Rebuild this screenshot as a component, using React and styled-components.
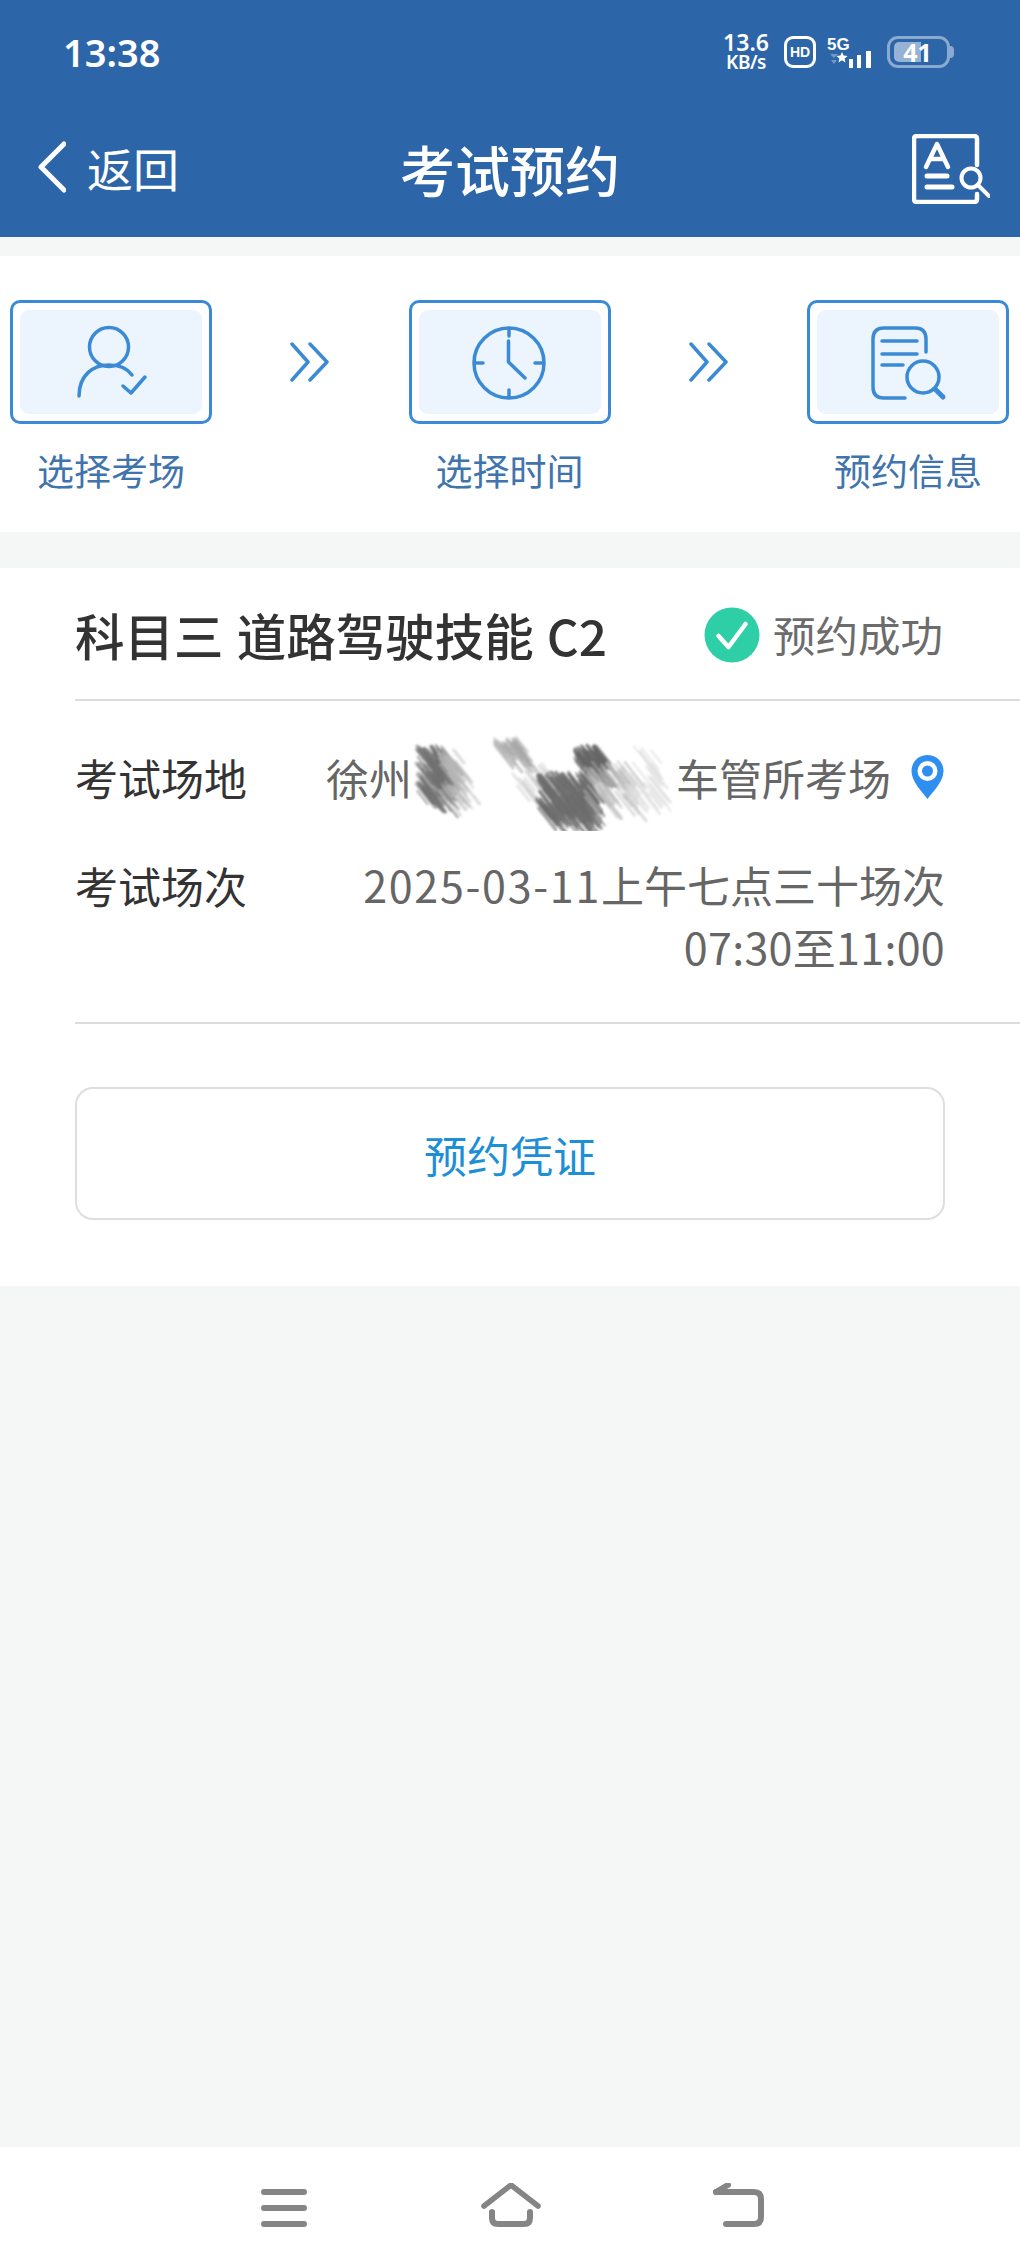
import React from "react";
import styled, { createGlobalStyle } from "styled-components";

const Global = createGlobalStyle`
  html, body { margin: 0; padding: 0; background: #f4f7f6; }
  * { box-sizing: border-box; }
  body { font-family: "Noto Sans CJK SC", "Noto Sans", sans-serif; }
`;

const Page = styled.div`
  width: 1020px;
  height: 2267px;
  display: flex;
  flex-direction: column;
  background: #f4f7f6;
  overflow: hidden;
`;

const Header = styled.header`
  height: 237px;
  background: #2d65a9;
  color: #fff;
  flex: none;
`;

const StatusBar = styled.div`
  height: 104px;
  padding: 0 70px 0 63px;
  display: flex;
  align-items: center;
  justify-content: space-between;
`;

const Clock = styled.span`
  font-family: "Noto Sans", sans-serif;
  font-size: 38px;
  font-weight: 600;
  line-height: 1;
`;

const StatusIcons = styled.div`
  display: flex;
  align-items: center;
`;

const NetSpeed = styled.div`
  width: 48px;
  margin-right: 14px;
  font-family: "Noto Sans", sans-serif;
  font-weight: 600;
  text-align: center;
  font-size: 23px;
  line-height: 20px;
  & small { display: block; font-size: 19px; font-weight: 600; letter-spacing: -0.5px; }
`;

const HdBadge = styled.div`
  width: 32px;
  height: 32px;
  margin-right: 11px;
  border: 3px solid #fff;
  border-radius: 9px;
  display: flex;
  align-items: center;
  justify-content: center;
  font-family: "Liberation Sans", sans-serif;
  font-size: 14px;
  font-weight: 700;
`;

const Signal = styled.svg`
  width: 46px;
  height: 34px;
  margin-right: 14px;
  display: block;
`;

const SignalText = styled.text`
  font-family: "Liberation Sans", sans-serif;
  font-size: 17px;
  font-weight: 700;
  fill: #fff;
`;

const Battery = styled.div`
  position: relative;
  width: 63px;
  height: 32px;
  border: 3px solid rgba(255, 255, 255, 0.45);
  border-radius: 11px;
  display: flex;
  align-items: center;
  justify-content: center;
  font-family: "Noto Sans", sans-serif;
  font-size: 25px;
  font-weight: 700;
  line-height: 1;
  padding-right: 2px;
  &::before {
    content: "";
    position: absolute;
    left: 4px;
    top: 3px;
    bottom: 3px;
    width: 27px;
    border-radius: 5px 0 0 5px;
    background: rgba(255, 255, 255, 0.5);
  }
  &::after {
    content: "";
    position: absolute;
    right: -7px;
    top: 7px;
    width: 4px;
    height: 12px;
    border-radius: 0 5px 5px 0;
    background: rgba(255, 255, 255, 0.45);
  }
  & span { position: relative; }
`;

const NavBar = styled.div`
  position: relative;
  height: 129px;
  padding: 0 30px 0 38px;
  display: flex;
  align-items: center;
  justify-content: space-between;
`;

const BackLink = styled.div`
  display: flex;
  align-items: center;
  gap: 21px;
  font-size: 46px;
  line-height: 1;
  padding-bottom: 4px;
`;

const NavTitle = styled.h1`
  position: absolute;
  left: 0;
  right: 0;
  top: 33px;
  margin: 0;
  text-align: center;
  font-size: 55px;
  line-height: 62px;
  font-weight: 500;
`;

const Steps = styled.section`
  margin-top: 19px;
  height: 276px;
  flex: none;
  background: #fff;
  padding: 44px 11px 0 10px;
  display: flex;
  justify-content: space-between;
  align-items: flex-start;
`;

const Step = styled.div`
  width: 202px;
  display: flex;
  flex-direction: column;
  align-items: center;
`;

const StepBox = styled.div`
  width: 202px;
  height: 124px;
  padding: 7px;
  border: 3.5px solid #3a8ad6;
  border-radius: 10px;
`;

const StepInner = styled.div`
  height: 100%;
  border-radius: 9px;
  background: #ecf4fd;
  display: flex;
  align-items: center;
  justify-content: center;
`;

const StepLabel = styled.div`
  margin-top: 21px;
  font-size: 37px;
  line-height: 50px;
  color: #3f74ad;
  white-space: nowrap;
`;

const StepArrow = styled.svg`
  width: 40px;
  height: 40px;
  margin-top: 42px;
  display: block;
`;

const Card = styled.section`
  margin-top: 36px;
  height: 718px;
  flex: none;
  background: #fff;
  padding-left: 75px;
`;

const TitleRow = styled.div`
  height: 133px;
  padding-right: 77px;
  border-bottom: 2px solid #dcdcdc;
  display: flex;
  align-items: center;
  justify-content: space-between;
`;

const SubjectTitle = styled.h2`
  margin: 0;
  font-size: 49.5px;
  line-height: 1;
  font-weight: 500;
  word-spacing: 2px;
  color: #333;
  white-space: nowrap;
  padding-top: 3px;
`;

const StatusTag = styled.div`
  display: flex;
  align-items: center;
  gap: 13px;
  font-size: 42.5px;
  line-height: 1;
  color: #6c6c6c;
  padding-top: 2px;
`;

const Info = styled.div`
  height: 323px;
  padding: 44px 75px 0 0;
  border-bottom: 2px solid #dcdcdc;
`;

const InfoRow = styled.div`
  display: flex;
  justify-content: space-between;
  align-items: flex-start;
  margin-bottom: 44px;
`;

const InfoLabel = styled.div`
  font-size: 43px;
  line-height: 64px;
  color: #333;
  white-space: nowrap;
`;

const InfoValue = styled.div`
  position: relative;
  display: ${p => (p.$stacked ? "block" : "flex")};
  align-items: center;
  font-size: 43px;
  line-height: ${p => (p.$stacked ? 62 : 64)}px;
  color: #666;
  text-align: right;
  white-space: nowrap;
`;

const Digits = styled.span`
  letter-spacing: ${p => p.$spacing}px;
`;

const HiddenGap = styled.span`
  display: inline-block;
  width: 264px;
`;

const Smudge = styled.svg`
  position: absolute;
  left: 60px;
  top: -24px;
  width: 300px;
  height: 110px;
  pointer-events: none;
`;

const Pin = styled.svg`
  margin-left: 19px;
  width: 35px;
  height: 46px;
  display: block;
`;

const VoucherButton = styled.button`
  display: block;
  width: 870px;
  height: 133px;
  margin-top: 63px;
  border: 2px solid #dedede;
  border-radius: 18px;
  background: #fff;
  color: #1d8fd6;
  font-family: inherit;
  font-size: 43px;
`;

const Spacer = styled.div`
  flex: 1;
`;

const BottomNav = styled.nav`
  flex: none;
  height: 120px;
  background: #fff;
  display: flex;
  align-items: flex-start;
  padding: 36px 0 0 261px;
`;

const NavIcon = styled.svg`
  display: block;
  height: 48px;
  width: ${p => p.$w}px;
  margin-right: ${p => p.$gap || 0}px;
`;

const STROKE = "#3a8ad6";
const lineProps = { fill: "none", stroke: STROKE, strokeWidth: 3.5, strokeLinecap: "round", strokeLinejoin: "round" };

const Arrow = () => (
  <StepArrow viewBox="0 0 40 40" {...lineProps}>
    <path d="M2 2 L18 20 L2 38" />
    <path d="M20 2 L37 20 L20 38" />
  </StepArrow>
);

const PersonIcon = () => (
  <svg width="100" height="80" viewBox="60 321 100 80" {...lineProps}>
    <circle cx="108" cy="346" r="19.5" />
    <path d="M78 395 C78 374 92 364 108 364 C118 364 126 367 131 374" />
    <path d="M122 385 L130 392 L144 376" />
  </svg>
);

const ClockIcon = () => (
  <svg width="100" height="80" viewBox="460 321 100 80" {...lineProps}>
    <circle cx="509" cy="362" r="35" />
    <path d="M509 328 V335 M509 389 V396 M475 362 H483 M535 362 H543" />
    <path d="M508.500 340 V361 L525 377" />
  </svg>
);

const DocIcon = () => (
  <svg width="100" height="80" viewBox="858 321 100 80" {...lineProps}>
    <path d="M926 351 V338 Q926 327 915 327 H884 Q873 327 873 338 V386 Q873 397 884 397 H905" />
    <path d="M882 340 H917 M882 353 H917 M882 364 H903" />
    <circle cx="923" cy="376" r="16" />
    <path d="M935 388 L943 396" strokeWidth="5" />
  </svg>
);

/* Hand-scribbled censor marks: each zone is hatched with many short strokes. */
const hatch = (x0, y0, x1, y1, count, color, opacity, seed) => {
  const out = [];
  let s = seed;
  const rnd = () => {
    s = (s * 9301 + 49297) % 233280;
    return s / 233280;
  };
  for (let i = 0; i < count; i++) {
    const x = x0 + rnd() * (x1 - x0);
    const y = y0 + rnd() * (y1 - y0);
    const len = 12 + rnd() * 24;
    out.push(
      <line
        key={`${seed}-${i}`}
        x1={x}
        y1={y}
        x2={x + len * 0.62}
        y2={y + len * 0.78}
        stroke={color}
        strokeOpacity={opacity}
        strokeWidth={1.6 + rnd() * 1.6}
      />
    );
  }
  return out;
};

const NameSmudge = () => (
  <Smudge viewBox="0 0 300 110">
    <defs>
      <filter id="soft" x="-10%" y="-10%" width="120%" height="120%">
        <feGaussianBlur stdDeviation="1.100" />
      </filter>
    </defs>
    <rect x="26" y="0" width="262" height="110" fill="#fff" />
    <g filter="url(#soft)" strokeLinecap="round">
      {hatch(30, 24, 56, 72, 110, "#6f6f6f", 0.6, 11)}
      {hatch(52, 28, 72, 72, 45, "#b9b9b9", 0.5, 23)}
      {hatch(108, 16, 132, 28, 30, "#a8a8a8", 0.6, 37)}
      {hatch(126, 40, 160, 70, 30, "#d0d0d0", 0.6, 41)}
      {hatch(188, 24, 212, 42, 70, "#666", 0.7, 53)}
      {hatch(150, 50, 200, 90, 190, "#6d6d6d", 0.68, 67)}
      {hatch(198, 40, 240, 76, 55, "#bcbcbc", 0.55, 79)}
      {hatch(238, 24, 268, 74, 30, "#e0e0e0", 0.7, 91)}
    </g>
  </Smudge>
);

export default function App() {
  return (
    <Page>
      <Global />
      <Header>
        <StatusBar>
          <Clock>13:38</Clock>
          <StatusIcons>
            <NetSpeed>
              13.6<small>KB/s</small>
            </NetSpeed>
            <HdBadge>HD</HdBadge>
            <Signal viewBox="0 0 46 34">
              <SignalText x="0" y="15">5G</SignalText>
              <path d="M3 19 H11 L7 23 Z M4 25 H10 L7 29 Z" fill="rgba(255,255,255,.35)" />
              <path d="M15 20 l2 4.500 5 .5 -3.700 3 1 5 -4.300 -2.600 -4.300 2.600 1 -5 -3.700 -3 5 -.5 Z" fill="#fff" transform="translate(3 1) scale(.8)" />
              <rect x="22" y="24" width="4" height="9" fill="#fff" />
              <rect x="30" y="20" width="4" height="13" fill="#fff" />
              <rect x="39" y="16" width="5" height="17" fill="#fff" />
            </Signal>
            <Battery>
              <span>41</span>
            </Battery>
          </StatusIcons>
        </StatusBar>
        <NavBar>
          <BackLink>
            <svg width="28" height="52" viewBox="0 0 28 52" fill="none" stroke="#fff" strokeWidth="5" strokeLinecap="round" strokeLinejoin="round">
              <path d="M26 3 L3 26 L26 49" />
            </svg>
            返回
          </BackLink>
          <NavTitle>考试预约</NavTitle>
          <svg width="78" height="70" viewBox="0 0 78 70" fill="none" stroke="#fff" strokeLinecap="round" strokeLinejoin="round">
            <path d="M65 31 V5 Q65 2 62 2 H5 Q2 2 2 5 V65 Q2 68 5 68 H62 Q65 68 65 65 V60" strokeWidth="4.500" />
            <path d="M14 33 L25 10 L36 33 M18 25 H32" strokeWidth="4.500" />
            <path d="M15 42 H35 M15 53 H40" strokeWidth="5" />
            <circle cx="59" cy="44" r="9.500" strokeWidth="4" />
            <path d="M66 51 L77 62" strokeWidth="4" />
          </svg>
        </NavBar>
      </Header>

      <Steps>
        <Step>
          <StepBox><StepInner><PersonIcon /></StepInner></StepBox>
          <StepLabel>选择考场</StepLabel>
        </Step>
        <Arrow />
        <Step>
          <StepBox><StepInner><ClockIcon /></StepInner></StepBox>
          <StepLabel>选择时间</StepLabel>
        </Step>
        <Arrow />
        <Step>
          <StepBox><StepInner><DocIcon /></StepInner></StepBox>
          <StepLabel>预约信息</StepLabel>
        </Step>
      </Steps>

      <Card>
        <TitleRow>
          <SubjectTitle>科目三 道路驾驶技能 C2</SubjectTitle>
          <StatusTag>
            <svg width="56" height="56" viewBox="0 0 55 56">
              <circle cx="27.500" cy="28" r="27.500" fill="#2ecfa6" />
              <path d="M14 29 L24 40 L41 17" fill="none" stroke="#fff" strokeWidth="4.500" strokeLinecap="round" strokeLinejoin="round" />
            </svg>
            预约成功
          </StatusTag>
        </TitleRow>
        <Info>
          <InfoRow>
            <InfoLabel>考试场地</InfoLabel>
            <InfoValue>
              徐州<HiddenGap />车管所考场
              <Pin viewBox="0 0 34 46">
                <path d="M17 1 C7.500 1 1 8.500 1 17 C1 28 12 38 17 45 C22 38 33 28 33 17 C33 8.500 26.500 1 17 1 Z" fill="#2f8ff0" />
                <circle cx="17" cy="17" r="10" fill="#fff" />
                <circle cx="17" cy="17" r="5.500" fill="#2f8ff0" />
              </Pin>
              <NameSmudge />
            </InfoValue>
          </InfoRow>
          <InfoRow>
            <InfoLabel>考试场次</InfoLabel>
            <InfoValue $stacked>
              <Digits $spacing={1.7}>2025-03-11</Digits>上午七点三十场次
              <br />
              <Digits $spacing={0.3}>07:30至11:00</Digits>
            </InfoValue>
          </InfoRow>
        </Info>
        <VoucherButton>预约凭证</VoucherButton>
      </Card>

      <Spacer />

      <BottomNav>
        <NavIcon $w={46} $gap={174} viewBox="0 0 46 48" fill="none" stroke="#858585" strokeWidth="6" strokeLinecap="round">
          <path d="M3 9 H43 M3 25 H43 M3 41 H43" />
        </NavIcon>
        <NavIcon $w={60} $gap={171} viewBox="0 0 60 48" fill="none" stroke="#858585" strokeLinecap="round" strokeLinejoin="round">
          <path d="M3 23 L30 2 L57 23" strokeWidth="5.500" />
          <path d="M11 29 V35 Q11 41 17 41 H43 Q49 41 49 35 V29" strokeWidth="6" />
        </NavIcon>
        <NavIcon $w={52} viewBox="0 0 52 48" fill="none" stroke="#858585" strokeLinecap="round" strokeLinejoin="round">
          <path d="M4 9 H42 Q49 9 49 16 V34 Q49 41 42 41 H14" strokeWidth="6" />
          <path d="M16 2 L4 9" strokeWidth="6" />
        </NavIcon>
      </BottomNav>
    </Page>
  );
}
